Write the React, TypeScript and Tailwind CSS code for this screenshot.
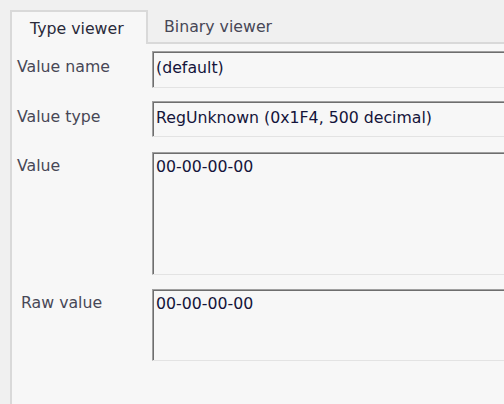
const font = { fontFamily: '"DejaVu Sans", Verdana, sans-serif' };

interface FieldRowProps {
  label: string;
  value: string;
  boxClass: string;
  padClass: string;
  labelClass?: string;
}

function FieldRow({ label, value, boxClass, padClass, labelClass = "" }: FieldRowProps) {
  return (
    <div className={`flex ${boxClass}`}>
      <div className={`w-[135px] shrink-0 text-[#474756] ${padClass} ${labelClass}`}>
        <span className="block leading-[18px]">{label}</span>
      </div>
      {/* sunken edit box, runs past the right edge */}
      <div className="w-[400px] shrink-0 border border-[#a0a0a0] border-b-[#e3e3e3] border-r-[#e3e3e3] bg-[#f7f7f7] shadow-[inset_1px_1px_0_#6e6e6e]">
        <div className={`pl-[3px] text-[#14143a] leading-[18px] ${padClass}`}>{value}</div>
      </div>
    </div>
  );
}

export default function App() {
  return (
    <div
      className="w-[504px] h-[404px] overflow-hidden bg-[#f0f0f0] pt-[10px] pl-[10px] flex flex-col text-[15.75px]"
      style={font}
    >
      {/* tabs */}
      <div className="flex h-[34px] shrink-0">
        <div className="w-[138px] flex items-center pl-[18px] pt-[2px] border-2 border-b-0 border-[#d9d9d9] bg-[#f7f7f7] text-[#2a2a3a]">
          Type viewer
        </div>
        <div className="flex-1 flex items-center pl-[16px] pt-[2px] border-b-2 border-[#d9d9d9] text-[#474756]">
          Binary viewer
        </div>
      </div>

      {/* panel */}
      <div className="flex-1 border-l-2 border-[#d9d9d9] bg-[#f7f7f7] pl-[5px] flex flex-col">
        <FieldRow label="Value name" value="(default)" boxClass="mt-[7px] h-[37px]" padClass="pt-[7px]" />
        <FieldRow
          label="Value type"
          value="RegUnknown (0x1F4, 500 decimal)"
          boxClass="mt-[13px] h-[36px]"
          padClass="pt-[7px]"
        />
        <FieldRow label="Value" value="00-00-00-00" boxClass="mt-[15px] h-[123px]" padClass="pt-[5px]" />
        <FieldRow
          label="Raw value"
          value="00-00-00-00"
          boxClass="mt-[14px] h-[72px]"
          padClass="pt-[5px]"
          labelClass="pl-[4px]"
        />
      </div>
    </div>
  );
}
